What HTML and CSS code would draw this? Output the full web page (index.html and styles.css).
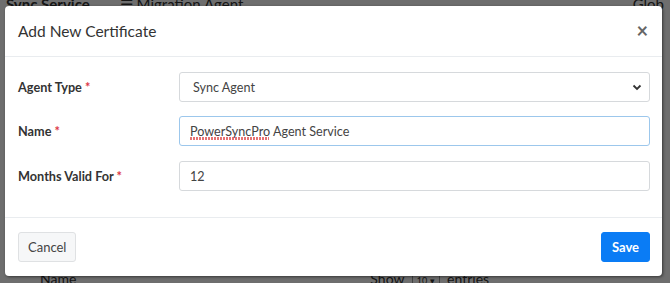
FILE: index.html
```html
<!DOCTYPE html>
<html lang="en">
<head>
  <meta charset="UTF-8">
  <title>Add New Certificate</title>
  <link rel="stylesheet" href="styles.css">
</head>
<body>

  <!-- Page behind the backdrop -->
  <div class="page">
    <div class="page-tabs">
      <span class="tab active">Sync Service</span>
      <span class="tab">&#9776; Migration Agent</span>
      <span class="tab right">Glob</span>
    </div>
    <div class="page-foot">
      <span class="foot-name">Name</span>
      <span class="foot-show">Show <span class="mini-select">10 &#9662;</span> entries</span>
    </div>
  </div>

  <div class="backdrop"></div>

  <!-- Modal dialog -->
  <div class="modal">
    <div class="modal-header">
      <h5 class="modal-title">Add New Certificate</h5>
      <span class="close">&times;</span>
    </div>

    <div class="modal-body">
      <div class="form-row">
        <label class="form-label">Agent Type <span class="req">*</span></label>
        <div class="select-wrap">
          <select class="form-control">
            <option>Sync Agent</option>
          </select>
          <svg class="caret" width="10" height="7" viewBox="0 0 10 7">
            <path d="M1.5 1.5 L5 5 L8.5 1.5" fill="none" stroke="#333" stroke-width="1.8"/>
          </svg>
        </div>
      </div>

      <div class="form-row">
        <label class="form-label">Name <span class="req">*</span></label>
        <div class="input-wrap">
          <input type="text" class="form-control focused" value="PowerSyncPro Agent Service" spellcheck="false">
          <span class="squiggle"></span>
        </div>
      </div>

      <div class="form-row last">
        <label class="form-label">Months Valid For <span class="req">*</span></label>
        <input type="text" class="form-control" value="12">
      </div>
    </div>

    <div class="modal-footer">
      <button class="btn btn-light">Cancel</button>
      <button class="btn btn-primary">Save</button>
    </div>
  </div>

</body>
</html>
```

FILE: styles.css
```css
/* Base page */
body {
  margin: 0;
  padding: 0;
  width: 670px;
  height: 283px;
  overflow: hidden;
  position: relative;
  background: #ffffff;
  font-family: "Lato", "Open Sans", sans-serif;
  color: #333;
}

/* Faint page content behind the overlay */
.page {
  height: 100%;
  display: flex;
  flex-direction: column;
  justify-content: space-between;
}

.page-tabs {
  display: flex;
  gap: 30px;
  padding: 0 6px;
  font-size: 15px;
  line-height: 14px;
  margin-top: -3px;
}

.tab.active {
  font-weight: bold;
  border-bottom: 2px solid #000;
}

.tab.right {
  margin-left: auto;
}

.page-foot {
  display: flex;
  font-size: 14px;
  line-height: 14px;
  margin-bottom: -5px;
}

.foot-name {
  margin-left: 40px;
}

.foot-show {
  margin-left: 294px;
}

.mini-select {
  font-size: 9px;
  border: 1px solid #999;
  padding: 0 4px;
  margin: 0 4px;
}

/* Dark overlay */
.backdrop {
  position: absolute;
  inset: 0;
  background: rgba(0, 0, 0, 0.57);
}

/* Dialog */
.modal {
  position: absolute;
  top: 6px;
  left: 5px;
  width: 657px;
  height: 270px;
  background: #fff;
  border-radius: 4px;
  box-shadow: 1px 1px 3px rgba(0, 0, 0, 0.5);
  display: flex;
  flex-direction: column;
}

.modal-header {
  height: 51px;
  flex: none;
  box-sizing: border-box;
  display: flex;
  align-items: center;
  justify-content: space-between;
  padding: 0 13px;
  border-bottom: 1px solid #e9ecef;
}

.modal-title {
  margin: 0;
  font-size: 15.5px;
  font-weight: normal;
  color: #333;
}

.close {
  font-size: 20px;
  font-weight: bold;
  color: #666;
  line-height: 1;
  margin-right: 1px;
  margin-top: -2px;
}

.modal-body {
  flex: none;
  padding: 15px 12px 26px 13px;
  display: flex;
  flex-direction: column;
  gap: 14px;
  border-bottom: 1px solid #e9ecef;
}

.form-row {
  display: flex;
  align-items: center;
}

.form-row.last {
  margin-top: 1px;
}

.form-label {
  width: 161px;
  flex: none;
  font-size: 12.7px;
  font-weight: bold;
  color: #333;
}

.req {
  color: #dc3545;
}

.form-control {
  flex: 1;
  width: 100%;
  height: 30px;
  box-sizing: border-box;
  border: 1px solid #d6d9dc;
  border-radius: 3px;
  padding: 0 10px;
  font-family: inherit;
  font-size: 12.6px;
  color: #444;
  background: #fff;
  outline: none;
}

.form-control.focused {
  border-color: #9cc7ec;
}

.select-wrap,
.input-wrap {
  flex: 1;
  position: relative;
  display: flex;
}

select.form-control {
  appearance: none;
  padding-left: 13px;
}

.caret {
  position: absolute;
  right: 8px;
  top: 12px;
}

/* Spell check squiggle under "PowerSyncPro" */
.squiggle {
  position: absolute;
  left: 11px;
  top: 21px;
  width: 79px;
  height: 3px;
  background: repeating-linear-gradient(90deg, #e05050 0 2px, transparent 2px 3px);
  opacity: 0.8;
}

.modal-footer {
  flex: 1;
  display: flex;
  align-items: center;
  justify-content: space-between;
  padding: 0 12px 0 13px;
}

.btn {
  height: 30px;
  border-radius: 3px;
  font-family: inherit;
  font-size: 13px;
  padding: 0 9px;
}

.btn-light {
  background: #f6f7f8;
  border: 1px solid #dfe1e3;
  color: #444;
}

.btn-primary {
  background: #0a7cf5;
  border: 1px solid #0a7cf5;
  color: #fff;
  font-weight: bold;
  padding: 0 10px;
}
```
